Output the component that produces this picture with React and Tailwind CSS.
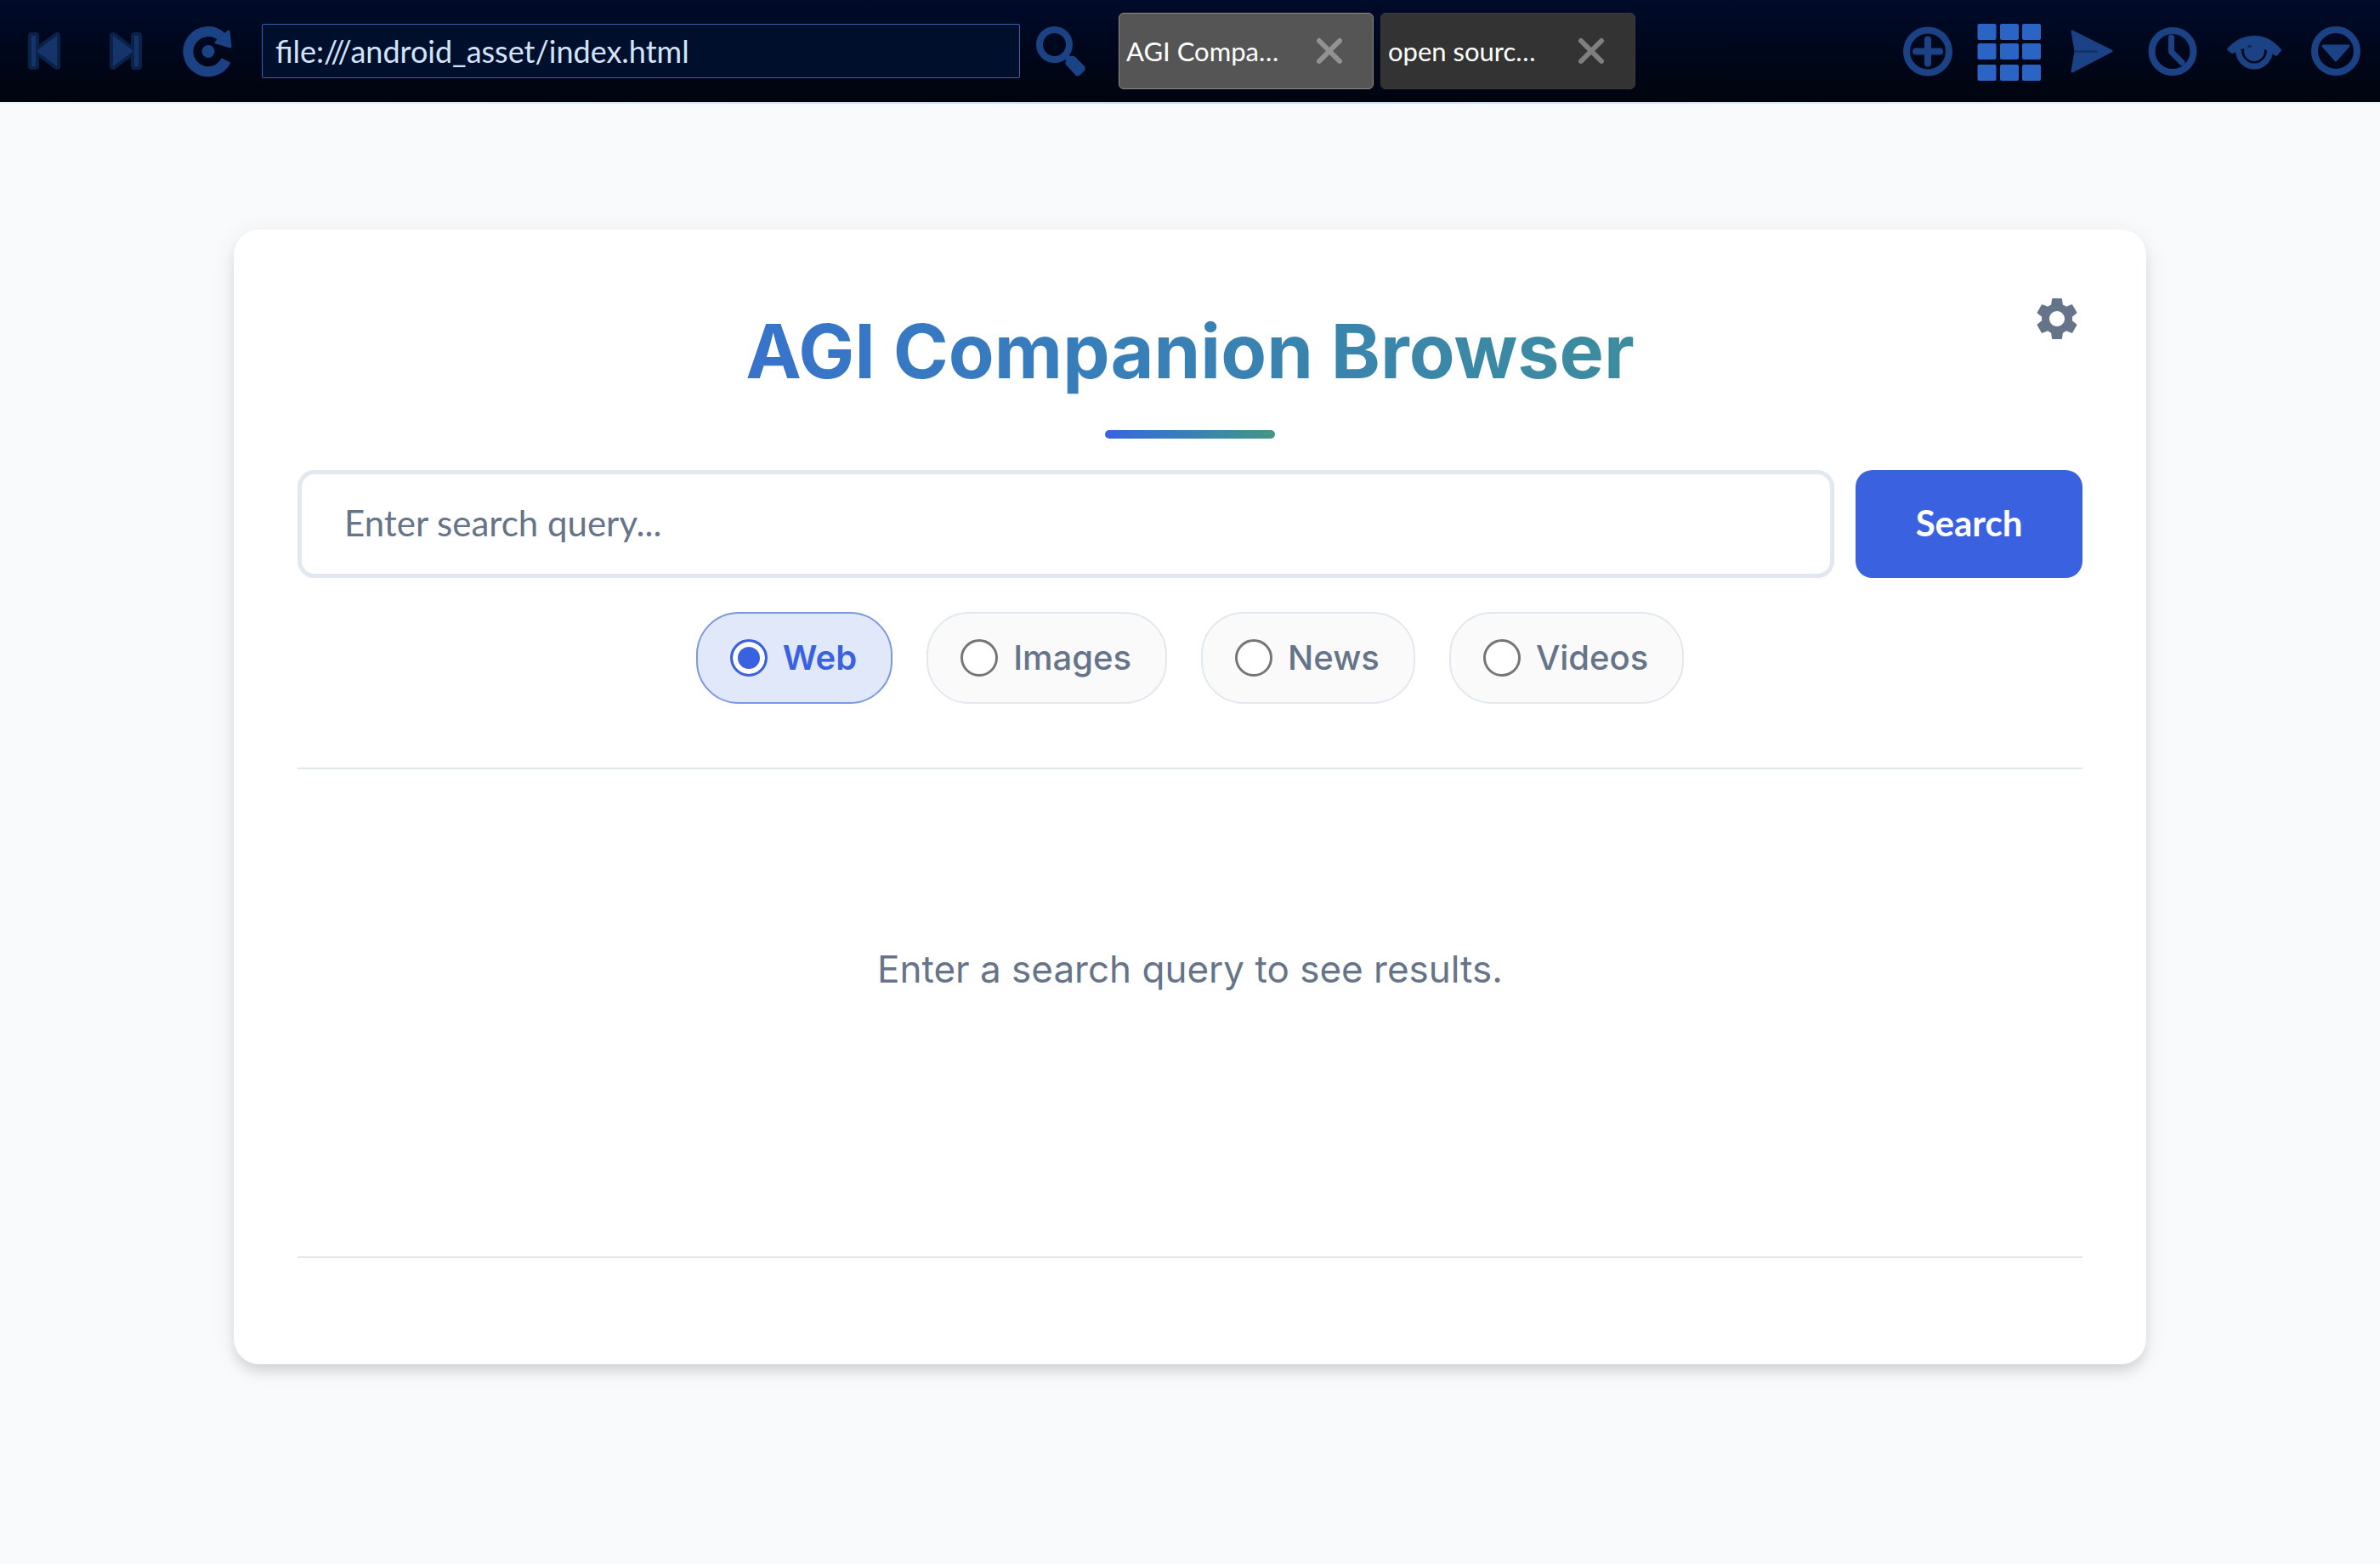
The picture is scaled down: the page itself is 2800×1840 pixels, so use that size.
import { MdSettings } from "react-icons/md";

const BLUE = "#1a4285";

function BarButton({ label, children }) {
  return (
    <button type="button" aria-label={label} className="w-24 shrink-0">
      <svg viewBox="0 0 96 120" className="block w-full" fill="none" aria-hidden="true">
        {children}
      </svg>
    </button>
  );
}

function SkipShape({ children }) {
  return (
    <>
      <g fill="#0a2148" stroke="#0a2148" strokeWidth="8" strokeLinejoin="round">
        {children}
      </g>
      <g fill="#16346c">{children}</g>
    </>
  );
}

function Tab({ title, active }) {
  return (
    <div
      className={
        active
          ? "flex h-[90px] w-[300px] items-center rounded-md border border-[#8a8a8a] bg-[#555555] pl-2"
          : "flex h-[90px] w-[300px] items-center rounded-md border border-[#3a3a3a] bg-[#333333] pl-2"
      }
    >
      <button type="button" className="flex-1 truncate text-left text-[31px] text-white">
        {title}
      </button>
      <button type="button" aria-label={"Close " + title} className="w-[100px] shrink-0">
        <svg viewBox="0 0 100 88" className="block w-full" aria-hidden="true">
          <path
            d="M37 32 61 56M61 32 37 56"
            stroke={active ? "#929292" : "#7f7f7f"}
            strokeWidth="6"
            strokeLinecap="round"
          />
        </svg>
      </button>
    </div>
  );
}

function Toolbar() {
  return (
    <header>
      <div className="flex items-center bg-linear-to-b from-[#000b2a] to-[#00040e] px-1">
        <BarButton label="Back">
          <SkipShape>
            <path d="M33 42h5v36h-5zM63 42v36L39 60z" />
          </SkipShape>
        </BarButton>
        <BarButton label="Forward">
          <SkipShape>
            <path d="M58 42h5v36h-5zM33 42v36l24-18z" />
          </SkipShape>
        </BarButton>
        <BarButton label="Reload">
          <path d="M70 71A23.5 23.5 0 1 1 65 43.5" stroke={BLUE} strokeWidth="12" />
          <path d="M73 37 75 55 58 50z" fill={BLUE} stroke={BLUE} strokeWidth="3" strokeLinejoin="round" />
          <circle cx="49" cy="60.5" r="7.5" fill={BLUE} />
        </BarButton>
        <input
          type="text"
          aria-label="Address"
          defaultValue="file:///android_asset/index.html"
          className="ml-4 h-16 w-[892px] rounded-xs border border-[#3a62a8] bg-[#00102c] px-[15px] text-[36px] text-[#d3e3fd]"
        />
        <BarButton label="Search">
          <circle cx="40.5" cy="52.5" r="17.5" stroke={BLUE} strokeWidth="8" />
          <path d="m52 64 8 8" stroke={BLUE} strokeWidth="7" />
          <path
            d="m55 73 6-6 3 1 11 11v3l-5 5-3 1-12-13z"
            fill={BLUE}
            stroke={BLUE}
            strokeWidth="3"
            strokeLinejoin="round"
          />
        </BarButton>
        <nav aria-label="Tabs" className="ml-5 flex gap-2">
          <Tab title="AGI Compa…" active />
          <Tab title="open sourc…" />
        </nav>
        <div className="ml-auto flex">
          <BarButton label="New tab">
            <circle cx="48" cy="60.5" r="25" stroke={BLUE} strokeWidth="8" />
            <path d="M34 60.5H62M48 46.5V74.5" stroke={BLUE} strokeWidth="8" strokeLinecap="round" />
          </BarButton>
          <BarButton label="Apps">
            <g fill="#2a65c5">
              {[28, 51, 76].map((y) =>
                [10.5, 37, 63].map((x) => <rect key={x + "-" + y} x={x} y={y} width="22" height="19" rx="2" />)
              )}
            </g>
          </BarButton>
          <BarButton label="Send">
            <path
              d="M26 37 72 60 26 84 30 60z"
              fill={BLUE}
              stroke={BLUE}
              strokeWidth="3"
              strokeLinejoin="round"
            />
            <path d="M28 60.5H56" stroke="#0f2d62" strokeWidth="2" />
          </BarButton>
          <BarButton label="History">
            <circle cx="48" cy="60.5" r="24.5" stroke={BLUE} strokeWidth="8" />
            <path d="M46.5 44V61L59 73.5" stroke={BLUE} strokeWidth="7" strokeLinecap="round" strokeLinejoin="round" />
          </BarButton>
          <BarButton label="View">
            <path
              d="M17 58Q30 43 48 43Q66 43 79 59L74 65 67 61Q58 54 48 54Q38 54 29 59L22 62z"
              fill={BLUE}
              stroke={BLUE}
              strokeWidth="2"
              strokeLinejoin="round"
            />
            <path d="M29.5 59A18.5 19 0 0 0 66.5 59" stroke={BLUE} strokeWidth="7" />
            <circle cx="48" cy="60" r="12" fill={BLUE} />
            <path d="M40 54 43 53 46 55 41 56z" fill="#0b2350" />
          </BarButton>
          <BarButton label="Menu">
            <circle cx="48" cy="60" r="25" stroke={BLUE} strokeWidth="8" />
            <path d="M33 54H63L48 71z" fill={BLUE} stroke={BLUE} strokeWidth="3" strokeLinejoin="round" />
          </BarButton>
        </div>
      </div>
      <div className="h-0.5 bg-linear-to-r from-[#eef3f9] via-[#c6d5e8] to-[#eef3f9]" />
    </header>
  );
}

function Pill({ label, checked }) {
  return (
    <label
      className={
        checked
          ? "flex h-[108px] items-center gap-4.5 rounded-[50px] border-2 border-[#7b98e0] bg-[#e1e8fa] pr-10 pl-[38px] text-[40px] font-semibold text-[#3a62e0]"
          : "flex h-[108px] items-center gap-4.5 rounded-[50px] border-2 border-[#e2e8f0] bg-[#fafafb] pr-10 pl-[38px] text-[40px] font-medium text-[#667489]"
      }
    >
      <input
        type="radio"
        name="kind"
        defaultChecked={checked}
        className="size-11 appearance-none rounded-full border-3 border-[#767676] bg-white checked:border-[#3a62e0] checked:bg-[#3a62e0] checked:shadow-[inset_0_0_0_6px_white]"
      />
      {label}
    </label>
  );
}

export default function App() {
  return (
    <div className="min-h-screen bg-[#f9fafc] font-['Lato',sans-serif]">
      <Toolbar />
      <main className="relative mx-auto mt-[148px] w-[calc(100%-550px)] rounded-[30px] bg-white p-[75px] font-['Inter',sans-serif] shadow-[0_10px_15px_-2px_rgba(0,0,0,0.12),0_4px_30px_-2px_rgba(0,0,0,0.08)]">
        <button type="button" aria-label="Settings" className="absolute top-[75px] right-[75px] text-[#667489]">
          <MdSettings size={60} />
        </button>
        <div className="flex flex-col items-center pt-3">
          <h1 className="w-full bg-linear-to-r from-[#3a62e0] to-[#449684] bg-clip-text text-center text-[88px] leading-[112px] font-bold text-transparent">
            AGI Companion Browser
          </h1>
          <div className="mt-[37px] h-2.5 w-[200px] rounded-full bg-linear-to-r from-[#3a62e0] to-[#449684]" />
        </div>
        <form className="mt-[37px] flex gap-[25px] font-['Lato',sans-serif]" onSubmit={(e) => e.preventDefault()}>
          <input
            type="text"
            aria-label="Search query"
            placeholder="Enter search query..."
            className="h-[127px] min-w-0 flex-1 rounded-[20px] border-5 border-[#e2e8f0] bg-white px-[50px] pb-1 text-[42px] text-[#667489] placeholder:text-[#667489]"
          />
          <button type="submit" className="w-[267px] rounded-[20px] bg-[#3a62e0] pb-0.5 text-[42px] font-bold text-white">
            Search
          </button>
        </form>
        <div role="radiogroup" aria-label="Result type" className="mt-10 flex justify-center gap-10">
          <Pill label="Web" checked />
          <Pill label="Images" />
          <Pill label="News" />
          <Pill label="Videos" />
        </div>
        <section className="mt-[75px] min-h-[577px] border-y-2 border-[#e2e8f0] pt-[200px] text-center">
          <p className="text-[44px] leading-[70px] text-[#667489]">Enter a search query to see results.</p>
        </section>
        <div className="h-[50px]" />
      </main>
    </div>
  );
}
